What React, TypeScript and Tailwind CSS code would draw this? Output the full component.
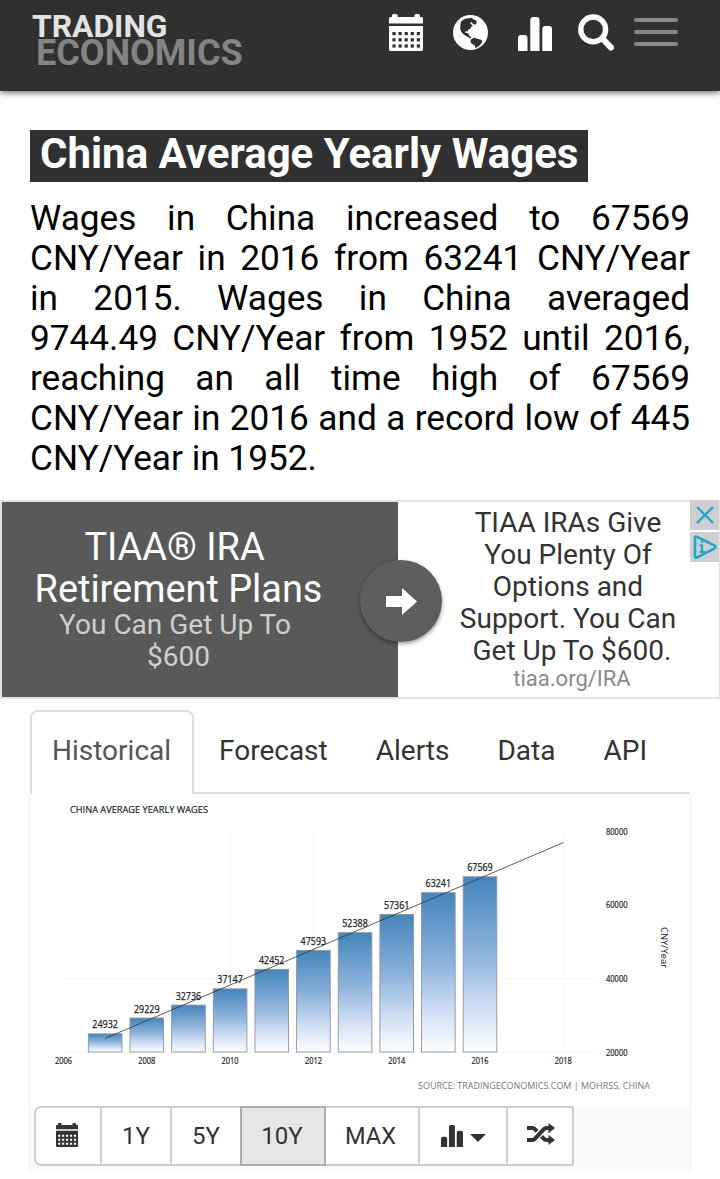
import clsx from "clsx";

const wages = [
  { year: 2007, value: 24932 },
  { year: 2008, value: 29229 },
  { year: 2009, value: 32736 },
  { year: 2010, value: 37147 },
  { year: 2011, value: 42452 },
  { year: 2012, value: 47593 },
  { year: 2013, value: 52388 },
  { year: 2014, value: 57361 },
  { year: 2015, value: 63241 },
  { year: 2016, value: 67569 },
];

const tabs = ["Forecast", "Alerts", "Data", "API"];

const summary = [
  "Wages in China increased to 67569",
  "CNY/Year in 2016 from 63241 CNY/Year",
  "in 2015. Wages in China averaged",
  "9744.49 CNY/Year from 1952 until 2016,",
  "reaching an all time high of 67569",
  "CNY/Year in 2016 and a record low of 445",
];

// chart scales
const xFor = (year: number) => 33.5 + (year - 2006) * 41.65;
const yFor = (value: number) => 258 - ((value - 20000) / 60000) * 221;

function CalendarIcon({ className, hole }: { className: string; hole: string }) {
  return (
    <svg viewBox="0 0 34 37" className={className} preserveAspectRatio="none">
      <path
        fill="currentColor"
        d="M3 3V1.6Q3 0 4.6 0H7Q8.6 0 8.6 1.6V3H25.4V1.6Q25.4 0 27 0H29.4Q31 0 31 1.6V3H32.5Q34 3 34 4.5V9.5H0V4.5Q0 3 1.5 3ZM0 12H34V35.5Q34 37 32.5 37H1.5Q0 37 0 35.5Z"
      />
      {[18, 24.2, 30.4].map((y) =>
        [3.4, 9.5, 15.6, 21.7, 27.8].map((x) => (
          <rect key={`${x}-${y}`} x={x} y={y} width="3.2" height="3.2" fill={hole} />
        ))
      )}
    </svg>
  );
}

function GlobeIcon() {
  return (
    <svg viewBox="0 0 35 35" className="h-[35px] w-[35px]">
      <circle cx="17.5" cy="17.5" r="17.5" fill="#fff" />
      <path
        fill="#303030"
        d="M7.4 10 8 6.6 11.4 4 15 3.2 18.6 2.8 20.6 4.4 23.4 5.4 23.6 8.4 22 9.8 19.6 8.4 18.2 6.8 17.2 8.6 19.8 10.6 18 12 17.6 13.4 15.6 14.6 14.4 16.6 12.8 16 12.2 17.8 15.4 18.4 16.2 20.8 18.4 22.6 17.4 23.6 14.6 21.8 11 19.8 8.6 17.2 7.2 14Z"
      />
      <path
        fill="#303030"
        d="M18.4 24 21.2 22.8 24.4 23.8 28 24.8 29.4 26 28.2 28.8 25.4 31.4 22.4 33 21.6 30.2 18.4 28.4 17.4 26Z"
      />
    </svg>
  );
}

function BarsIcon({ className }: { className: string }) {
  return (
    <svg viewBox="0 0 34 34" className={className} fill="currentColor" preserveAspectRatio="none">
      <path d="M0 34V21Q0 18 3 18H6.5Q9.5 18 9.5 21V34Z" />
      <path d="M12.3 34V3Q12.3 0 15.3 0H18.5Q21.5 0 21.5 3V34Z" />
      <path d="M24.3 34V12Q24.3 9 27.3 9H31Q34 9 34 12V34Z" />
    </svg>
  );
}

function SearchIcon() {
  return (
    <svg viewBox="0 0 37 37" className="h-[37px] w-[37px]" fill="none" stroke="#fff">
      <circle cx="15.2" cy="15.4" r="12.4" strokeWidth="5.4" />
      <path d="M24.5 24.5 33 33.6" strokeWidth="6" strokeLinecap="round" />
    </svg>
  );
}

function ShuffleIcon() {
  return (
    <svg viewBox="0 0 28 22" className="h-[22px] w-[28px]">
      <g fill="none" stroke="#333" strokeWidth="4">
        <path d="M0 5H5.2Q7 5 8.4 6.6L10 8.4" />
        <path d="M0 17H5.2Q7 17 8.4 15.4L16.4 6.6Q17.8 5 19.6 5H22" />
        <path d="M14.6 13.4 16.4 15.4Q17.8 17 19.6 17H22" />
      </g>
      <path fill="#333" d="M21.5 0 28 5 21.5 10.2ZM21.5 11.8 28 17 21.5 22Z" />
    </svg>
  );
}

function Header() {
  return (
    <header className="flex h-[91px] items-start justify-between bg-[#303030] shadow-[0_2px_6px_rgba(40,35,60,0.65)]">
      <div className="ml-[32px] mt-[13px] font-bold">
        <p className="text-[31.8px] leading-[26px] text-[#e3e3e3]">TRADING</p>
        <p className="ml-[4px] text-[36px] leading-[28px] text-[#848484]">ECONOMICS</p>
      </div>
      <div className="mr-[42px] mt-[14px] flex text-white">
        <CalendarIcon className="mr-[30px] h-[37px] w-[34px]" hole="#303030" />
        <div className="mr-[30px] mt-px">
          <GlobeIcon />
        </div>
        <BarsIcon className="mr-[26px] mt-[3px] h-[34px] w-[34px]" />
        <SearchIcon />
        <div className="ml-[19px] mt-[4px] flex flex-col gap-[8px]">
          <span className="h-[4px] w-[44px] rounded-full bg-[#8b888b]" />
          <span className="h-[4px] w-[44px] rounded-full bg-[#8b888b]" />
          <span className="h-[4px] w-[44px] rounded-full bg-[#8b888b]" />
        </div>
      </div>
    </header>
  );
}

function Ad() {
  return (
    <section className="relative mt-[22px] flex h-[199px] border-2 border-r-[1px] border-[#e3e3e5]">
      <div className="w-[396px] shrink-0 bg-[#595959] pt-[24px] text-center text-white">
        <p className="w-[345px] text-[37.9px] leading-[42px]">TIAA® IRA</p>
        <p className="w-[353px] text-[37.9px] leading-[42px]">Retirement Plans</p>
        <p className="mt-[-1px] w-[346px] text-[28px] leading-[32px] text-[#cfcfcf]">You Can Get Up To</p>
        <p className="w-[353px] text-[28px] leading-[32px] text-[#cfcfcf]">$600</p>
      </div>
      <div className="w-[340px] shrink-0 whitespace-nowrap pt-[5px] text-center text-[28px] leading-[32px] text-[#333]">
        <p>TIAA IRAs Give</p>
        <p>You Plenty Of</p>
        <p>Options and</p>
        <p>Support. You Can</p>
        <p className="pl-[8px]">Get Up To $600.</p>
        <p className="mt-[-1px] pl-[8px] text-[22px] leading-[25px] text-[#8a8a8a]">tiaa.org/IRA</p>
      </div>
      <div className="absolute left-[358px] top-[58px] flex h-[82px] w-[82px] items-center justify-center rounded-full bg-[#5e5f5d] shadow-[0_2px_4px_rgba(0,0,0,0.4)]">
        <svg viewBox="0 0 31 27" className="h-[27px] w-[31px]">
          <path fill="#fff" d="M0 8H16V0L31 13.5 16 27V19H0Z" />
        </svg>
      </div>
      <div className="absolute right-0 top-[-2px] flex flex-col gap-[2px]">
        <div className="flex h-[30px] w-[29px] items-center justify-center bg-[#cfced2]">
          <svg viewBox="0 0 18 18" className="h-[18px] w-[18px]" stroke="#22a7c3" strokeWidth="2.4">
            <path d="M1 1 17 17M17 1 1 17" />
          </svg>
        </div>
        <div className="flex h-[30px] w-[29px] items-center justify-center bg-[#cfced2]">
          <svg viewBox="0 0 24 24" className="h-[24px] w-[24px]" fill="none" stroke="#22a7c3">
            <path d="M2 2.5Q2 .8 4 1.8L21.5 10.5Q23.5 12 21.5 13.3L4 22.5Q2 23.2 2 21.5Z" strokeWidth="2.6" />
            <path d="M6.5 10.5H9V17M6.5 17H12M9 5.6V8" strokeWidth="2.2" />
          </svg>
        </div>
      </div>
    </section>
  );
}

function Chart() {
  return (
    <svg viewBox="0 0 660 310" className="h-[310px] w-[660px]" fontFamily='"Open Sans", "Noto Sans", sans-serif'>
      <defs>
        <linearGradient id="bar" x1="0" y1="0" x2="0" y2="1">
          <stop offset="0" stopColor="#4585ba" />
          <stop offset="0.42" stopColor="#89b0da" />
          <stop offset="0.75" stopColor="#d0dff4" />
          <stop offset="1" stopColor="#fff" />
        </linearGradient>
      </defs>
      <g stroke="#f6f6f6">
        {[2010, 2012, 2018].map((year) => (
          <line key={year} x1={xFor(year) + 0.5} x2={xFor(year) + 0.5} y1="37" y2="258" />
        ))}
        <line x1="33" x2="568" y1="184.5" y2="184.5" />
        <line x1="33" x2="568" y1="258.5" y2="258.5" />
      </g>
      <text x="40" y="19" fontSize="9.8" fill="#222" stroke="#222" strokeWidth="0.2" textLength="138" lengthAdjust="spacingAndGlyphs">
        CHINA AVERAGE YEARLY WAGES
      </text>
      {wages.map(({ year, value }) => (
        <rect
          key={year}
          x={xFor(year) - 16.8}
          y={yFor(value)}
          width="33.6"
          height={258 - yFor(value)}
          fill="url(#bar)"
          stroke="#8d959e"
          strokeWidth="0.9"
        />
      ))}
      <line x1="75" y1="244.5" x2="533.5" y2="48.5" stroke="#333" strokeWidth="0.8" />
      {wages.map(({ year, value }) => (
        <text
          key={year}
          x={xFor(year) - 12.8}
          y={yFor(value) - 5.5}
          fontSize="10"
          fill="#222"
          stroke="#222"
          strokeWidth="0.25"
          textLength="25.5"
          lengthAdjust="spacingAndGlyphs"
        >
          {value}
        </text>
      ))}
      <g fontSize="8.4" fill="#222" stroke="#222" strokeWidth="0.2">
        {[2006, 2008, 2010, 2012, 2014, 2016, 2018].map((year) => (
          <text key={year} x={xFor(year) - 8.5} y="270" textLength="17" lengthAdjust="spacingAndGlyphs">
            {year}
          </text>
        ))}
        {[80000, 60000, 40000, 20000].map((value) => (
          <text key={value} x="576" y={yFor(value) + 3.5} textLength="21.5" lengthAdjust="spacingAndGlyphs">
            {value}
          </text>
        ))}
      </g>
      <text transform="translate(631 133) rotate(90)" fontSize="9" fill="#222" textLength="41" lengthAdjust="spacingAndGlyphs">
        CNY/Year
      </text>
      <text x="388" y="295" fontSize="9.8" fill="#777" textLength="232" lengthAdjust="spacingAndGlyphs">
        SOURCE: TRADINGECONOMICS.COM | MOHRSS, CHINA
      </text>
    </svg>
  );
}

const cell = "flex h-[60px] items-center justify-center border-2 border-[#cfcfcf] bg-white";

function RangeBar() {
  return (
    <div className="ml-[4px] mt-[2px] flex text-[24px] text-[#333]">
      <button className={clsx(cell, "w-[68px] rounded-l-[7px] pr-[2px]")}>
        <CalendarIcon className="mb-[3px] h-[24px] w-[22px]" hole="#fff" />
      </button>
      <button className={clsx(cell, "ml-[-2px] w-[72px]")}>1Y</button>
      <button className={clsx(cell, "ml-[-2px] w-[72px]")}>5Y</button>
      <button className="z-10 ml-[-2px] flex h-[60px] w-[86px] items-center justify-center border-2 border-[#adadad] bg-[#e6e6e6] pr-[2px]">
        10Y
      </button>
      <button className={clsx(cell, "ml-[-2px] w-[96px] pr-[3px] pt-px text-[23.6px]")}>MAX</button>
      <button className={clsx(cell, "ml-[-2px] w-[90px] gap-[7px]")}>
        <BarsIcon className="h-[22px] w-[22px]" />
        <span className="mt-[4px] h-0 w-0 border-x-[8px] border-t-[8px] border-x-transparent border-t-[#333]" />
      </button>
      <button className={clsx(cell, "ml-[-2px] w-[68px] pb-[4px] pl-[2px]")}>
        <ShuffleIcon />
      </button>
    </div>
  );
}

export default function App() {
  return (
    <div className='h-[1179px] w-[720px] overflow-hidden bg-white font-["Roboto",sans-serif]'>
      <Header />
      <main className="mx-[30px] mt-[39px]">
        <h1 className="h-[52px] w-[558px] whitespace-nowrap bg-[#303030] pl-[10px] text-[42px] font-bold leading-[48px] text-white">
          China Average Yearly Wages
        </h1>
        <p className="mt-[16px] h-[280px] text-[35.2px] leading-[40px] text-black">
          {summary.map((line) => (
            <span key={line} className="block [text-align-last:justify]">
              {line}
            </span>
          ))}
          CNY/Year in 1952.
        </p>
      </main>
      <Ad />
      <nav className="mx-[30px] mt-[11px] flex h-[84px] text-[28px] leading-[80px] text-[#333]">
        <div className="w-[164px] rounded-t-[8px] border-2 border-b-0 border-[#dedede] pl-[20px] leading-[77px] text-[#555]">
          Historical
        </div>
        <div className="flex flex-1 gap-[48px] border-b-2 border-[#dedede] pl-[25px] leading-[81px]">
          {tabs.map((tab) => (
            <span key={tab}>{tab}</span>
          ))}
        </div>
      </nav>
      <section className="mx-[29px] h-[378px] border border-t-0 border-[#f4f2f4]">
        <Chart />
        <div className="h-[67px] bg-[#fdfafd]">
          <RangeBar />
        </div>
      </section>
    </div>
  );
}
